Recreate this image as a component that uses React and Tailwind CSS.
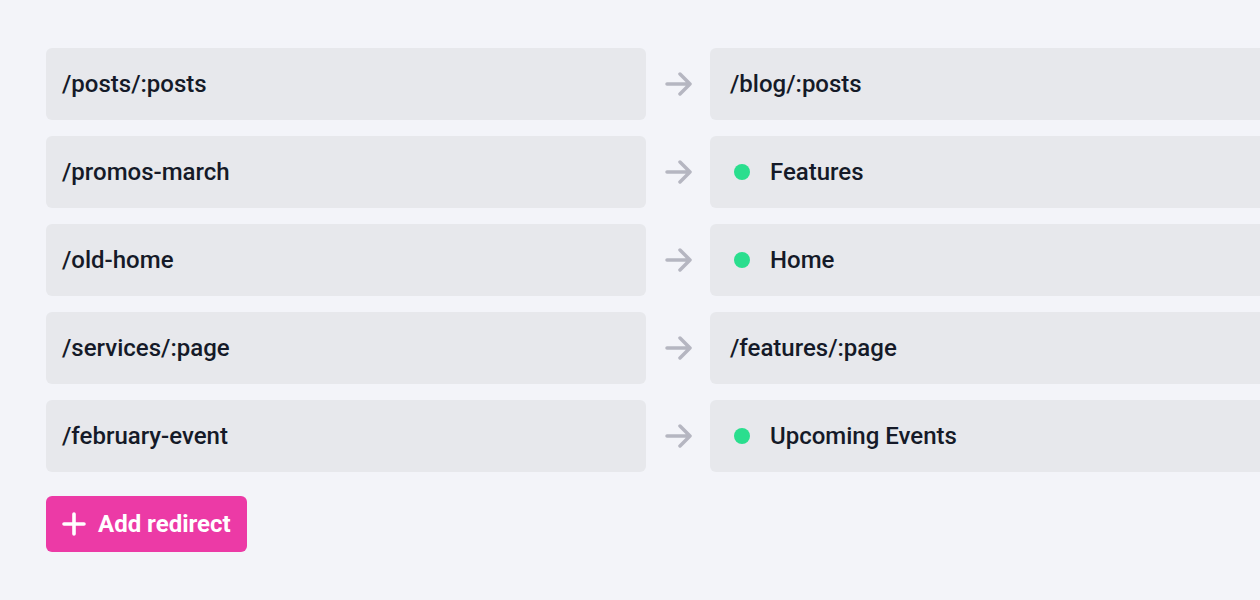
const ROWS = [
  { from: '/posts/:posts', to: '/blog/:posts' },
  { from: '/promos-march', to: 'Features', page: true },
  { from: '/old-home', to: 'Home', page: true },
  { from: '/services/:page', to: '/features/:page' },
  { from: '/february-event', to: 'Upcoming Events', page: true },
]

function Arrow() {
  return (
    <svg width="28" height="24" viewBox="0 0 28 24" fill="none" className="shrink-0">
      <path d="M2 12h23M15 2l10 10-10 10" stroke="#b5b6c1" strokeWidth="3.5" strokeLinecap="round" strokeLinejoin="round" />
    </svg>
  )
}

function PlusIcon() {
  return (
    <svg width="24" height="24" viewBox="0 0 24 24" fill="none" className="shrink-0">
      <path d="M12 2v20M2 12h20" stroke="white" strokeWidth="3.6" strokeLinecap="round" />
    </svg>
  )
}

export default function App() {
  return (
    <div className="w-screen h-[600px] overflow-hidden bg-[#f3f4f9] text-[#151a28] font-['Roboto',sans-serif]">
      <div className="pt-12 pl-[46px] flex flex-col gap-4">
        {ROWS.map(r => (
          <div key={r.from} className="flex items-center">
            <div className="w-[600px] h-[72px] shrink-0 rounded-md bg-[#e7e8ec] flex items-center pl-4 text-2xl font-medium">
              {r.from}
            </div>
            <div className="w-16 shrink-0 flex justify-center pl-0.5">
              <Arrow />
            </div>
            <div className="w-[600px] h-[72px] shrink-0 rounded-md bg-[#e7e8ec] flex items-center pl-5 text-2xl font-medium">
              {r.page && <span className="w-4 h-4 rounded-full bg-[#2ade8e] ml-1 mr-5" />}
              {r.to}
            </div>
          </div>
        ))}
        <div className="pt-2">
          <button className="h-14 pl-4 pr-4 rounded-md bg-[#ec3aa6] text-white flex items-center gap-3 text-2xl font-bold">
            <PlusIcon />
            Add redirect
          </button>
        </div>
      </div>
    </div>
  )
}
